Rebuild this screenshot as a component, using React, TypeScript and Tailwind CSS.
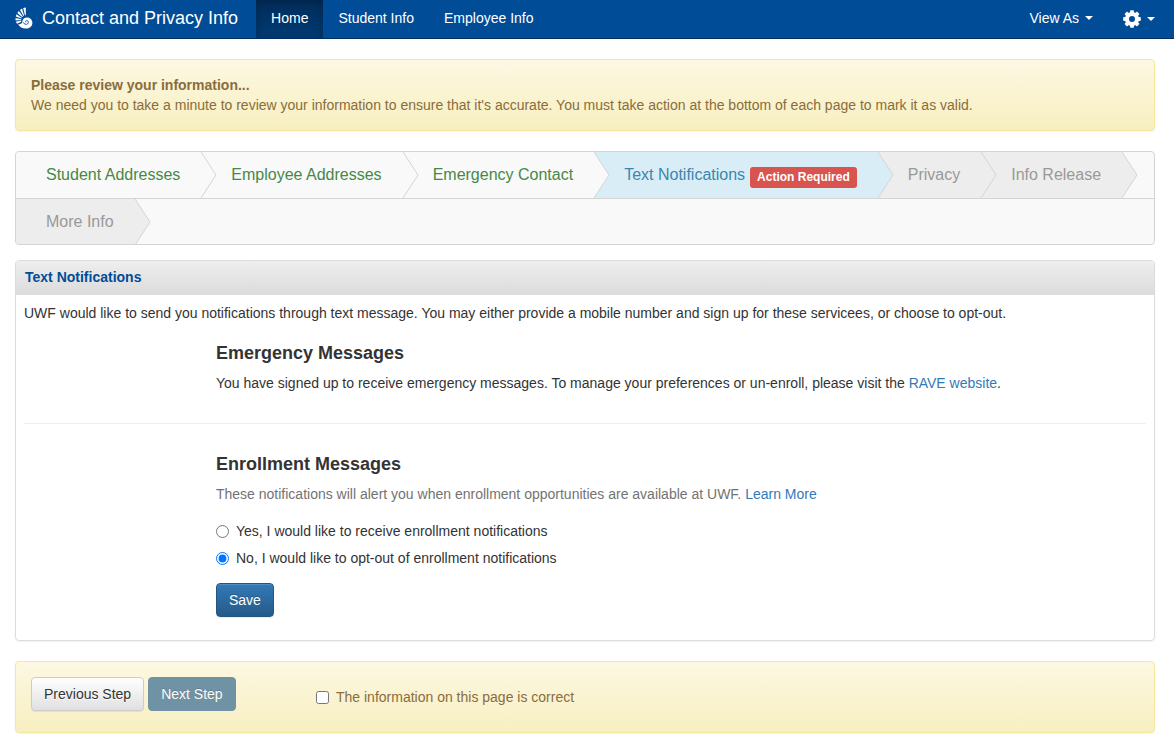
import { useState } from "react";
import clsx from "clsx";

type StepStatus = "complete" | "active" | "pending";

const steps: { title: string; status: StepStatus; badge?: string }[] = [
  { title: "Student Addresses", status: "complete" },
  { title: "Employee Addresses", status: "complete" },
  { title: "Emergency Contact", status: "complete" },
  { title: "Text Notifications", status: "active", badge: "Action Required" },
  { title: "Privacy", status: "pending" },
  { title: "Info Release", status: "pending" },
  { title: "More Info", status: "pending" },
];

const navLinks = ["Home", "Student Info", "Employee Info"];

const stepStyles = {
  complete: "bg-[#f9f9f9] text-[#468847]",
  active: "bg-[#d9edf7] text-[#3a87ad]",
  pending: "bg-[#ededed] text-[#999999]",
};

const chevronFills = {
  complete: "fill-[#f9f9f9]",
  active: "fill-[#d9edf7]",
  pending: "fill-[#ededed]",
};

const NautilusLogo = () => (
  <svg viewBox="0 0 18 22" className="w-[18px] h-[22px]" aria-hidden="true">
    <g fill="white">
      <path d="M3 17.2C5 17.4 6.6 16.8 7.2 15.2C7.4 12.4 9.2 10.4 12 10.4C15.2 10.4 17.4 12.9 17.4 15.8C17.4 19.4 14.4 21.6 10.8 21.6C7.4 21.6 4.6 20 3 17.2Z" />
      <path d="M2 16.8L0.8 14.7L6.2 13.6L6.3 14.8Z" />
      <path d="M0.6 13.5L0.5 10.9L6.2 12.2L6.2 12.9Z" />
      <path d="M0.8 9.6L1.6 7.2L6.8 10.9L6.4 11.5Z" />
      <path d="M2.3 6L3.9 4L7.9 9.6L7.3 10.2Z" />
      <path d="M5 3L7 1.6L9.2 8.7L8.5 9.1Z" />
      <path d="M8.2 1.1L10.8 0.5L10.8 8.1L10 8.4Z" />
    </g>
    <path
      d="M8.2 15.6C9 17.4 11.6 18 12.9 16.6C13.9 15.4 13.2 13.6 11.8 13.5C10.8 13.5 10.3 14.3 10.7 15"
      fill="none"
      stroke="#004c97"
      strokeWidth="0.9"
      strokeLinecap="round"
    />
  </svg>
);

const GearIcon = () => (
  <svg viewBox="0 0 18 18" className="w-[18px] h-[18px]" aria-hidden="true">
    <circle cx="9" cy="9" r="5" fill="none" stroke="white" strokeWidth="4" />
    <g fill="white">
      {[0, 45, 90, 135, 180, 225, 270, 315].map((angle) => (
        <path key={angle} d="M7.3 0.2H10.7L11.2 3.6H6.8Z" transform={`rotate(${angle} 9 9)`} />
      ))}
    </g>
  </svg>
);

const Caret = () => (
  <svg viewBox="0 0 8 4" className="w-2 h-1" fill="white" aria-hidden="true">
    <path d="M0 0H8L4 4Z" />
  </svg>
);

const Navbar = () => (
  <nav className="flex items-stretch justify-between h-[39px] bg-[#004c97] border-b border-[#002d5f] text-white">
    <div className="flex">
      <a href="#" className="flex items-center gap-[9px] pl-[15px] pr-[18px] pb-0.5 text-lg whitespace-nowrap">
        <NautilusLogo />
        Contact and Privacy Info
      </a>
      {navLinks.map((link) => (
        <a
          key={link}
          href="#"
          className={clsx(
            "flex items-center px-[15px] pb-0.5 whitespace-nowrap",
            link === "Home" && "bg-linear-to-b from-[#002d5b] to-[#003a73] shadow-[inset_0_3px_9px_rgba(0,0,0,0.2)]"
          )}
        >
          {link}
        </a>
      ))}
    </div>
    <div className="flex pr-1">
      <button className="flex items-center gap-1.5 px-[15px] pb-0.5">
        View As <Caret />
      </button>
      <button className="flex items-center gap-1.5 px-[15px]" aria-label="Settings">
        <GearIcon />
        <Caret />
      </button>
    </div>
  </nav>
);

const Wizard = () => (
  <div className="border border-[#d4d4d4] rounded-[4px] bg-[#f9f9f9] overflow-hidden">
    {/* The repeating background draws the rule between wrapped rows */}
    <ul className="flex flex-wrap -my-px bg-[linear-gradient(#d4d4d4_1px,transparent_1px)] bg-[length:100%_47px]">
      {steps.map((step) => (
        <li key={step.title} className="pt-px">
          <div className={clsx("relative flex items-center h-[46px] pl-[30px] pr-[21px] text-base", stepStyles[step.status])}>
            <a href="#" className="whitespace-nowrap">
              {step.title}
            </a>
            {step.badge && (
              <span className="ml-[5px] mt-1 px-[7px] h-[21px] leading-5 rounded-[3px] bg-[#d9534f] text-white text-xs font-bold whitespace-nowrap">
                {step.badge}
              </span>
            )}
            <svg
              viewBox="0 0 16 46"
              className={clsx("absolute top-0 left-full z-10 w-4 h-[46px]", chevronFills[step.status])}
              aria-hidden="true"
            >
              <path d="M0 0L15 23L0 46" stroke="#d4d4d4" />
            </svg>
          </div>
        </li>
      ))}
    </ul>
  </div>
);

const App = () => {
  const [enrollment, setEnrollment] = useState("no");
  const [confirmed, setConfirmed] = useState(false);

  return (
    <div className="bg-white text-[#333333] text-sm leading-5 font-['Liberation_Sans',Arial,sans-serif]">
      <Navbar />

      <main className="pl-[15px] pr-[19px] pt-5 pb-4">
        <div className="p-[15px] mb-5 border border-[#f5e79e] rounded-[4px] bg-linear-to-b from-[#fcf8e3] to-[#f8efc0] text-[#8a6d3b] shadow-[0_1px_2px_rgba(0,0,0,0.05)]">
          <strong className="block">Please review your information...</strong>
          <p>
            We need you to take a minute to review your information to ensure that it's accurate. You must take action at the bottom of each page to mark it as valid.
          </p>
        </div>

        <Wizard />

        {/* Panel */}
        <section className="mt-[15px] mb-5 border border-[#dddddd] rounded-[4px] shadow-[0_1px_2px_rgba(0,0,0,0.05)]">
          <h2 className="px-[9px] pt-1.5 pb-[7px] rounded-t-[3px] border-b border-[#dddddd] bg-linear-to-b from-[#eeeeee] to-[#dcdcdc] text-[#004c97] font-bold">
            Text Notifications
          </h2>
          <div className="px-2 pt-2 pb-[23px]">
            <p>
              UWF would like to send you notifications through text message. You may either provide a mobile number and sign up for these servicees, or choose to opt-out.
            </p>

            <div className="pl-48 pt-5">
              <h3 className="text-lg leading-5 font-bold">Emergency Messages</h3>
              <p className="mt-2.5">
                You have signed up to receive emergency messages. To manage your preferences or un-enroll, please visit the{" "}
                <a href="#" className="text-[#337ab7]">RAVE website</a>.
              </p>
            </div>

            <hr className="my-[30px] border-[#eeeeee]" />

            <div className="pl-48">
              <h3 className="text-lg leading-5 font-bold">Enrollment Messages</h3>
              <p className="mt-2.5 text-[#737373]">
                These notifications will alert you when enrollment opportunities are available at UWF.{" "}
                <a href="#" className="text-[#337ab7]">Learn More</a>
              </p>
              <div className="flex flex-col items-start gap-[7px] mt-[17px]">
                <label className="flex items-center gap-[7px]">
                  <input
                    type="radio"
                    name="enrollment"
                    className="w-[13px] h-[13px] accent-[#0075ff]"
                    checked={enrollment === "yes"}
                    onChange={() => setEnrollment("yes")}
                  />
                  Yes, I would like to receive enrollment notifications
                </label>
                <label className="flex items-center gap-[7px]">
                  <input
                    type="radio"
                    name="enrollment"
                    className="w-[13px] h-[13px] accent-[#0075ff]"
                    checked={enrollment === "no"}
                    onChange={() => setEnrollment("no")}
                  />
                  No, I would like to opt-out of enrollment notifications
                </label>
              </div>
              <button className="mt-[15px] px-3 py-1.5 border border-[#245580] rounded-[4px] bg-linear-to-b from-[#337ab7] to-[#265a88] text-white [text-shadow:0_-1px_0_rgba(0,0,0,0.2)] shadow-[inset_0_1px_0_rgba(255,255,255,0.15),0_1px_1px_rgba(0,0,0,0.075)]">
                Save
              </button>
            </div>
          </div>
        </section>

        {/* Step actions */}
        <div className="flex items-start p-[15px] pb-[21px] border border-[#f5e79e] rounded-[4px] bg-linear-to-b from-[#fcf8e3] to-[#f8efc0] text-[#8a6d3b] shadow-[0_1px_2px_rgba(0,0,0,0.05)]">
          <div className="flex gap-1 w-[285px]">
            <button className="px-3 py-1.5 border border-[#cccccc] rounded-[4px] bg-linear-to-b from-white to-[#e0e0e0] text-[#333333] whitespace-nowrap [text-shadow:0_1px_0_#fff] shadow-[inset_0_1px_0_rgba(255,255,255,0.15),0_1px_1px_rgba(0,0,0,0.075)]">
              Previous Step
            </button>
            <button
              disabled={!confirmed}
              className="px-3 py-1.5 border border-[#7092a5] rounded-[4px] bg-[#7092a5] text-[#fdfcf4] whitespace-nowrap [text-shadow:0_-1px_0_rgba(0,0,0,0.15)]"
            >
              Next Step
            </button>
          </div>
          <label className="flex items-center gap-[7px] pt-2.5">
            <input
              type="checkbox"
              className="w-[13px] h-[13px]"
              checked={confirmed}
              onChange={(e) => setConfirmed(e.target.checked)}
            />
            The information on this page is correct
          </label>
        </div>
      </main>
    </div>
  );
};

export default App;
